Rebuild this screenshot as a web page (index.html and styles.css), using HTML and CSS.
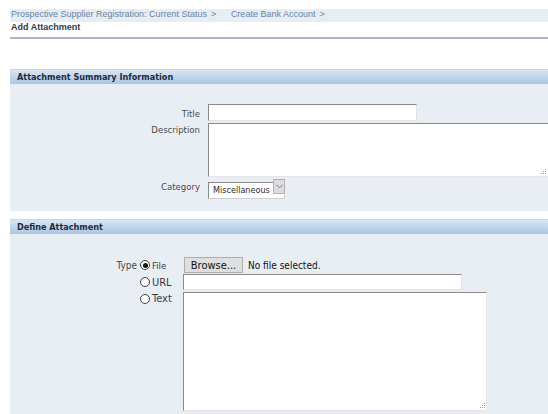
FILE: index.html
```html
<!DOCTYPE html>
<html lang="en">
<head>
<meta charset="utf-8">
<title>Add Attachment</title>
<link rel="stylesheet" href="styles.css">
</head>
<body>
<div class="page">
  <nav class="crumbs">
    <a class="crumb">Prospective Supplier Registration: Current Status</a><span class="sep">&gt;</span>
    <a class="crumb">Create Bank Account</a><span class="sep">&gt;</span>
  </nav>
  <h1 class="page-title">Add Attachment</h1>

  <section class="panel">
    <h2 class="panel-head">Attachment Summary Information</h2>
    <div class="panel-body summary-grid">
      <label class="label" for="att-title">Title</label>
      <input class="text-field title-field" id="att-title" type="text">

      <label class="label label-top" for="att-desc">Description</label>
      <span class="area-wrap desc-wrap">
        <textarea class="area-field" id="att-desc"></textarea>
        <span class="grip"><svg width="5" height="5" viewBox="0 0 5 5"><rect x="4" y="0" width="1" height="1"/><rect x="4" y="2" width="1" height="1"/><rect x="2" y="2" width="1" height="1"/><rect x="4" y="4" width="1" height="1"/><rect x="2" y="4" width="1" height="1"/><rect x="0" y="4" width="1" height="1"/></svg></span>
      </span>

      <label class="label" for="att-cat">Category</label>
      <span class="select-wrap">
        <select class="select-field" id="att-cat"><option>Miscellaneous</option></select>
        <span class="select-arrow"><svg width="7" height="5" viewBox="0 0 7 5"><path d="M0.5 0.8 L3.5 3.8 L6.5 0.8" fill="none" stroke="#7c7c7c" stroke-width="1"/></svg></span>
      </span>
    </div>
  </section>

  <section class="panel panel-define">
    <h2 class="panel-head">Define Attachment</h2>
    <div class="panel-body define-grid">
      <span class="label type-label">Type</span>
      <span class="choice"><span class="radio checked"></span><span class="choice-text small">File</span></span>
      <span class="file-row"><button class="browse" type="button">Browse...</button><span class="file-note">No file selected.</span></span>

      <span></span>
      <span class="choice"><span class="radio"></span><span class="choice-text">URL</span></span>
      <input class="text-field url-field" type="text">

      <span></span>
      <span class="choice choice-top"><span class="radio"></span><span class="choice-text">Text</span></span>
      <span class="area-wrap text-wrap">
        <textarea class="area-field"></textarea>
        <span class="grip"><svg width="5" height="5" viewBox="0 0 5 5"><rect x="4" y="0" width="1" height="1"/><rect x="4" y="2" width="1" height="1"/><rect x="2" y="2" width="1" height="1"/><rect x="4" y="4" width="1" height="1"/><rect x="2" y="4" width="1" height="1"/><rect x="0" y="4" width="1" height="1"/></svg></span>
      </span>
    </div>
  </section>
</div>
</body>
</html>
```
FILE: styles.css
```css
html, body {
  margin: 0;
  padding: 0;
  background: #ffffff;
  overflow: hidden;
}

body {
  font-family: "DejaVu Sans Condensed", "DejaVu Sans", sans-serif;
  font-stretch: condensed;
  color: #4a4a4a;
}

.page {
  width: 560px;
  padding: 9px 0 0 10px;
}

/* breadcrumb trail */
.crumbs {
  height: 13px;
  line-height: 13px;
  background: #e6edf5;
  font: 9px "Liberation Sans", Arial, sans-serif;
  color: #6885a1;
  white-space: nowrap;
  padding-left: 1px;
}

.crumb {
  color: inherit;
  text-decoration: none;
}

.sep {
  margin: 0 12px 0 4px;
}

.page-title {
  margin: 0;
  height: 15px;
  line-height: 17px;
  padding-left: 1px;
  font: bold 9px "Liberation Sans", Arial, sans-serif;
  color: #2e3b4f;
  border-bottom: 2px solid #aab6c3;
}

/* panels */
.panel {
  margin-top: 30px;
}

.panel-define {
  margin-top: 8px;
}

.panel-head {
  margin: 0;
  height: 14px;
  line-height: 14px;
  padding-left: 7px;
  font-family: "DejaVu Sans Condensed", "DejaVu Sans", sans-serif;
  font-stretch: condensed;
  font-size: 9px;
  font-weight: bold;
  color: #1c2b42;
  background: linear-gradient(#d9e6f2, #a9c6e2);
  border-top: 1px solid #c6d7e8;
}

.panel-body {
  background: #e9eef5;
}

.label {
  justify-self: end;
  align-self: center;
  font-size: 9.5px;
  color: #4a4a4a;
  white-space: nowrap;
}

.label-top {
  align-self: start;
  padding-top: 1px;
}

/* summary form */
.summary-grid {
  display: grid;
  grid-template-columns: 190px auto;
  column-gap: 8px;
  row-gap: 1px;
  padding: 20px 0 16px;
  justify-items: start;
}

.text-field {
  box-sizing: border-box;
  margin: 0;
  padding: 0 3px;
  height: 17px;
  background: #ffffff;
  border: 1px solid;
  border-color: #8a8a8a #e2e2e2 #e2e2e2 #8a8a8a;
  font-family: inherit;
  font-size: 9px;
  outline: none;
}

.title-field {
  width: 209px;
  margin-bottom: 1px;
}

.area-wrap {
  position: relative;
  display: block;
}

.area-field {
  display: block;
  box-sizing: border-box;
  margin: 0;
  padding: 2px 3px;
  width: 100%;
  height: 100%;
  resize: none;
  background: #ffffff;
  border: 1px solid;
  border-color: #8a8a8a #e6e6e6 #e6e6e6 #8a8a8a;
  font-family: inherit;
  font-size: 9px;
  outline: none;
}

.desc-wrap {
  width: 341px;
  height: 54px;
}

.grip {
  position: absolute;
  right: 2px;
  bottom: 3px;
  width: 5px;
  height: 5px;
  line-height: 0;
  fill: #9a9a9a;
}

.desc-wrap .grip {
  right: 3px;
}

.select-wrap {
  position: relative;
  display: block;
  width: 77px;
  height: 17px;
}

.select-field {
  appearance: none;
  -webkit-appearance: none;
  box-sizing: border-box;
  margin: 0;
  width: 100%;
  height: 100%;
  padding: 0 0 0 4px;
  background: #ffffff;
  border: 1px solid;
  border-color: #8a8a8a #cfcfcf #cfcfcf #8a8a8a;
  border-radius: 0;
  font-family: inherit;
  font-stretch: condensed;
  font-size: 9px;
  color: #2a2a2a;
  outline: none;
}

.select-arrow {
  position: absolute;
  top: 1px;
  right: 0;
  width: 12px;
  height: 15px;
  box-sizing: border-box;
  display: flex;
  align-items: center;
  justify-content: center;
  background: #dcdcdc;
  border: 1px solid #b2b2b2;
}

/* attachment definition */
.define-grid {
  display: grid;
  grid-template-columns: 128px 45px auto;
  grid-template-rows: 16px 16px 119px;
  row-gap: 1px;
  padding: 23px 0 10px;
  align-items: center;
  justify-items: start;
}

.define-grid > :nth-child(9) {
  margin-top: 1px;
}

.type-label {
  padding-right: 1px;
  font-size: 10px;
}

.choice {
  display: flex;
  align-items: center;
  padding-left: 2px;
  white-space: nowrap;
}

.choice-top {
  align-self: start;
  padding-top: 1px;
}

.radio {
  flex: none;
  box-sizing: border-box;
  width: 10px;
  height: 10px;
  border: 1px solid #3e3e3e;
  border-radius: 50%;
  background: #ffffff;
  display: flex;
  align-items: center;
  justify-content: center;
}

.radio.checked::after {
  content: "";
  width: 5px;
  height: 5px;
  border-radius: 50%;
  background: #111111;
}

.choice-text {
  margin-left: 2px;
  font-size: 11px;
  color: #3a3a3a;
}

.choice-text.small {
  margin-left: 2px;
  font-size: 9.5px;
}

.file-row {
  display: flex;
  align-items: center;
  padding-left: 1px;
}

.browse {
  box-sizing: border-box;
  height: 16px;
  width: 59px;
  margin: 0;
  padding: 0;
  background: #dfdfdf;
  border: 1px solid #adadad;
  border-radius: 0;
  font-family: inherit;
  font-stretch: condensed;
  font-size: 11px;
  color: #111111;
}

.file-note {
  margin-left: 5px;
  font-size: 10px;
  color: #111111;
}

.url-field {
  width: 279px;
  height: 16px;
}

.text-wrap {
  width: 304px;
  height: 119px;
  align-self: start;
}
```
